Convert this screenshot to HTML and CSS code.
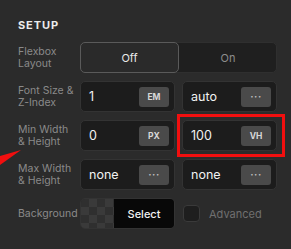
FILE: index.html
```html
<!DOCTYPE html>
<html lang="en">
<head>
  <meta charset="UTF-8" />
  <meta name="viewport" content="width=device-width, initial-scale=1.0"/>
  <title>Setup</title>
  <link rel="stylesheet" href="styles.css">
</head>
<body>

  <div class="panel">
    <h2>SETUP</h2>

    <div class="rows">
      <div class="label">Flexbox<br>Layout</div>
      <div class="toggle">
        <div class="toggle-opt active">Off</div>
        <div class="toggle-opt">On</div>
      </div>

      <div class="label">Font Size &amp;<br>Z-Index</div>
      <div class="pair">
        <div class="field"><span class="value">1</span><span class="unit">EM</span></div>
        <div class="field"><span class="value">auto</span><span class="unit dots">···</span></div>
      </div>

      <div class="label">Min Width<br>&amp; Height</div>
      <div class="pair">
        <div class="field"><span class="value">0</span><span class="unit">PX</span></div>
        <div class="field highlight"><span class="value">100</span><span class="unit">VH</span></div>
      </div>

      <div class="label">Max Width<br>&amp; Height</div>
      <div class="pair">
        <div class="field"><span class="value">none</span><span class="unit dots">···</span></div>
        <div class="field"><span class="value">none</span><span class="unit dots">···</span></div>
      </div>

      <div class="label">Background</div>
      <div class="pair">
        <div class="bg-picker">
          <div class="checker"></div>
          <div class="select">Select</div>
        </div>
        <label class="advanced"><span class="checkbox"></span>Advanced</label>
      </div>
    </div>
  </div>

  <!-- annotation arrow pointing at the highlighted field -->
  <svg class="arrow" width="24" height="20" viewBox="0 0 24 20">
    <polygon points="21,2 0,8 0,17" fill="#f20f0f"/>
  </svg>

</body>
</html>
```

FILE: styles.css
```css
body {
  margin: 0;
  background-color: #2b2b2b;
  font-family: 'Inter', 'Liberation Sans', sans-serif;
  width: 291px;
  height: 249px;
  overflow: hidden;
  position: relative;
}

.panel {
  padding: 19px 0 0 18px;
}

h2 {
  margin: 0 0 10px;
  font-size: 11px;
  line-height: 13px;
  font-weight: 700;
  letter-spacing: 0.9px;
  color: #ececec;
}

.rows {
  display: grid;
  grid-template-columns: 62px 197px;
  row-gap: 8px;
  align-items: center;
}

.label {
  font-size: 10.5px;
  line-height: 12px;
  color: #8a8a8a;
}

/* Flexbox on/off switch */
.toggle {
  display: grid;
  grid-template-columns: 98px 98px;
  height: 31px;
  border-radius: 5px;
  background-color: #1f1f1f;
  border: 1px solid #2f2f2f;
  box-sizing: border-box;
}

.toggle-opt {
  display: flex;
  align-items: center;
  justify-content: center;
  font-size: 11px;
  color: #8c8c8c;
}

.toggle-opt.active {
  margin: -1px 0 -1px -1px;
  background-color: #2a2a2a;
  border: 1px solid #5a5a5a;
  border-radius: 5px;
  color: #e8e8e8;
}

.pair {
  display: grid;
  grid-template-columns: 95px 95px;
  column-gap: 7px;
  align-items: center;
}

.field {
  position: relative;
  display: flex;
  align-items: center;
  justify-content: space-between;
  height: 31px;
  padding: 0 5px 0 8px;
  box-sizing: border-box;
  background-color: #1c1c1c;
  border: 1px solid #333333;
  border-radius: 5px;
}

.value {
  font-size: 12.5px;
  color: #f2f2f2;
}

.unit {
  width: 30px;
  height: 20px;
  border-radius: 3px;
  background-color: #4a4a4a;
  color: #d8d8d8;
  font-size: 8.5px;
  font-weight: 700;
  display: flex;
  align-items: center;
  justify-content: center;
}

.unit.dots {
  font-size: 10px;
  letter-spacing: 0.5px;
  font-weight: 700;
  color: #bdbdbd;
  padding-bottom: 2px;
  box-sizing: border-box;
}

/* red annotation frame */
.highlight::after {
  content: '';
  position: absolute;
  top: -7px;
  left: -6px;
  right: -9px;
  bottom: -7px;
  border: 3px solid #f20f0f;
}

.bg-picker {
  display: flex;
  height: 31px;
  border: 1px solid #333333;
  border-radius: 5px;
  overflow: hidden;
  box-sizing: border-box;
}

.checker {
  width: 33px;
  background-color: #2f2f2f;
  background-image:
    linear-gradient(45deg, #3a3a3a 25%, transparent 25%, transparent 75%, #3a3a3a 75%),
    linear-gradient(45deg, #3a3a3a 25%, transparent 25%, transparent 75%, #3a3a3a 75%);
  background-size: 16px 16px;
  background-position: 0 0, 8px 8px;
}

.select {
  flex: 1;
  display: flex;
  align-items: center;
  justify-content: center;
  background-color: #080808;
  color: #f2f2f2;
  font-size: 11px;
  font-weight: 500;
}

.advanced {
  display: flex;
  align-items: center;
  gap: 9px;
  padding-left: 1px;
  font-size: 11px;
  color: #707070;
}

.checkbox {
  width: 17px;
  height: 17px;
  box-sizing: border-box;
  background-color: #1e1e1e;
  border: 1px solid #3a3a3a;
  border-radius: 4px;
}

.arrow {
  position: absolute;
  left: 0;
  top: 148px;
}
```
